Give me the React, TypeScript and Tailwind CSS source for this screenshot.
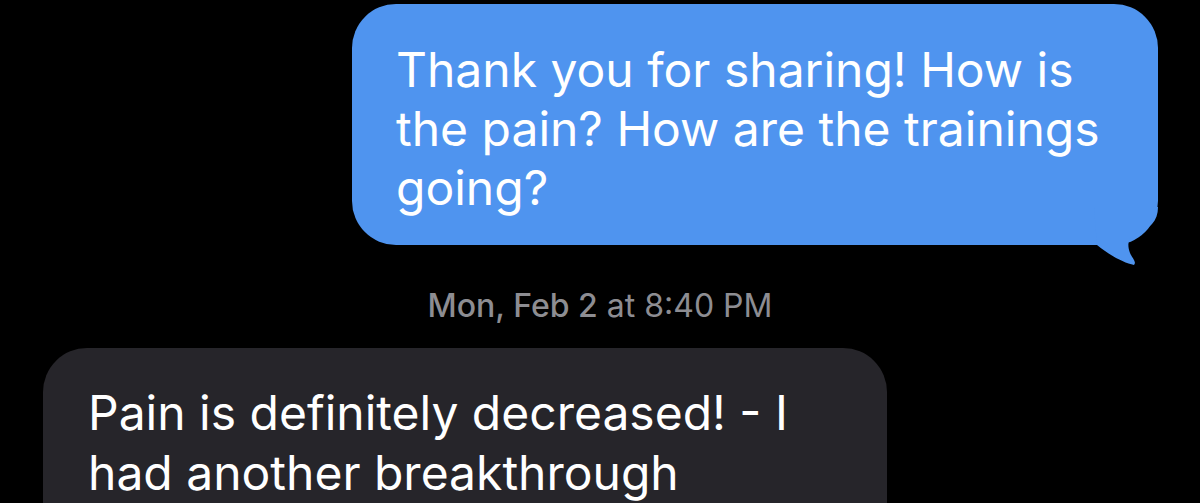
import React from "react";

const App = () => {
  return (
    <div
      className="w-[1200px] h-[503px] overflow-hidden bg-black"
      style={{ fontFamily: "Inter, 'Liberation Sans', sans-serif" }}>
      <div className="flex justify-end pt-[4px] pr-[42px]">
        <div className="relative w-[806px] h-[241px] rounded-[44px] bg-[#4f94ef] pl-[44px] pt-[36px] text-[48px] leading-[59px] text-white">
          <span className="block">Thank you for sharing! How is</span>
          <span className="block">the pain? How are the trainings</span>
          <span className="block">going?</span>
          {/* bubble tail */}
          <svg
            className="absolute right-[-6px] bottom-[-22px]"
            width="70"
            height="60"
            viewBox="0 0 70 60">
            <path
              d="M64 0 C64 14 56 22 40 27 C34 31 33 38 36 46 C38 51 43 55 40 58 C30 56 15 48 3 38 L0 0 Z"
              fill="#4f94ef"
            />
          </svg>
        </div>
      </div>

      <div className="flex justify-center pt-[41px] text-[32px] leading-[40px] text-[#8d8d92]">
        <span className="font-medium">Mon, Feb 2</span>
        <span className="ml-[9px]">at 8:40 PM</span>
      </div>

      <div className="pt-[22px] pl-[43px]">
        <div className="w-[844px] h-[200px] rounded-[44px] bg-[#26252a] pl-[45px] pt-[35px] text-[48px] leading-[60px] text-white">
          <span className="block">Pain is definitely decreased! - I</span>
          <span className="block">had another breakthrough</span>
        </div>
      </div>
    </div>
  );
};

export default App;
